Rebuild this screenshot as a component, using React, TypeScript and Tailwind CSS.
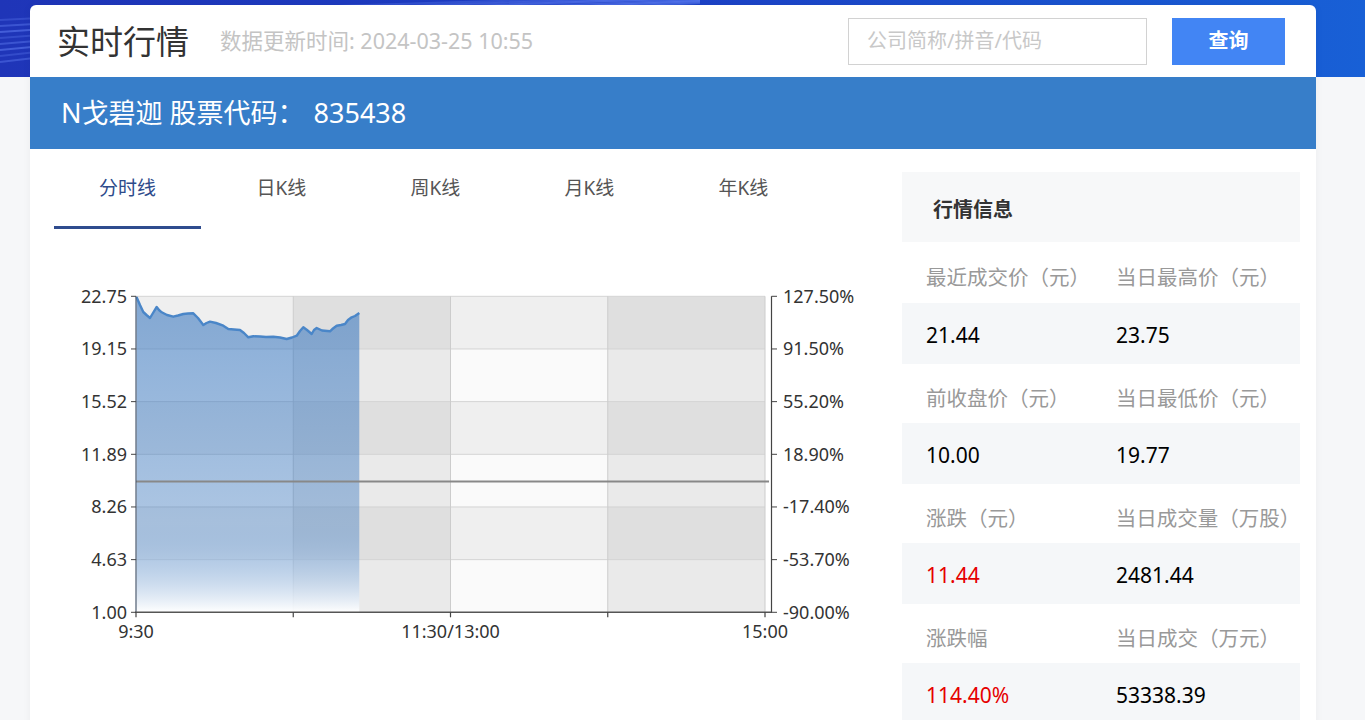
import React from "react";

const F = "font-['Noto_Sans','Noto_Sans_CJK_SC',sans-serif]";

const pts: [number, number][] = [
  [106.5, 68], [110, 76], [113.3, 83], [116.5, 86], [120, 89], [123, 84], [126.7, 78], [129, 81], [131.7, 83.3],
  [137, 86], [143.3, 87.7], [148, 86.5], [153.3, 85], [158, 84.5], [163.3, 84.3], [168, 89], [173.3, 96],
  [176.5, 94], [180, 92.7], [186, 94], [193.3, 96.7], [198.3, 100], [204, 100.5], [210, 101], [214, 104],
  [218.3, 108.3], [223.3, 107.3], [230, 107.5], [236, 108], [243.3, 107.7], [250, 108.5], [256.7, 110],
  [262, 108.5], [266.7, 106.7], [270, 102], [273.3, 98.3], [277, 101], [281.7, 105], [284, 101], [286.7, 99],
  [292, 101.5], [300, 102.3], [303, 99.5], [306.7, 96.7], [311, 96], [315, 95], [318, 91], [321.7, 88.3],
  [325, 87], [329.3, 84],
];

const X0 = 106;
const X1 = 735;
const Y0 = 67.3;
const Y1 = 383.3;
const CW = (X1 - X0) / 4;
const RH = (Y1 - Y0) / 6;

const leftLabels = ["22.75", "19.15", "15.52", "11.89", "8.26", "4.63", "1.00"];
const rightLabels = ["127.50%", "91.50%", "55.20%", "18.90%", "-17.40%", "-53.70%", "-90.00%"];

function Chart() {
  const line = pts.map((p, i) => `${i ? "L" : "M"}${p[0]},${p[1]}`).join(" ");
  const area = `${line} L${pts[pts.length - 1][0]},${Y1} L${pts[0][0]},${Y1} Z`;
  const ff = "'Noto Sans','Noto Sans CJK SC',sans-serif";
  return (
    <svg width="872" height="460" viewBox="0 0 872 460" className="block">
      <defs>
        <linearGradient id="areaG" x1="0" y1="0" x2="0" y2="1">
          <stop offset="0" stopColor="#3a78c0" stopOpacity="0.6" />
          <stop offset="0.72" stopColor="#3a78c0" stopOpacity="0.4" />
          <stop offset="1" stopColor="#ffffff" stopOpacity="0.95" />
        </linearGradient>
      </defs>
      {[0, 1, 2, 3].map((c) => (
        <rect key={"c" + c} x={X0 + c * CW} y={Y0} width={CW} height={Y1 - Y0} fill={c % 2 === 0 ? "#fafafa" : "#eaeaea"} />
      ))}
      {[0, 2, 4].map((r) => (
        <rect key={"r" + r} x={X0} y={Y0 + r * RH} width={X1 - X0} height={RH} fill="#000" fillOpacity="0.045" />
      ))}
      {[0, 1, 2, 3, 4, 5].map((r) => (
        <line key={"h" + r} x1={X0} x2={X1} y1={Y0 + r * RH} y2={Y0 + r * RH} stroke="#d4d4d4" strokeWidth="1" />
      ))}
      {[1, 2, 3, 4].map((c) => (
        <line key={"v" + c} x1={X0 + c * CW} x2={X0 + c * CW} y1={Y0} y2={Y1} stroke="#cccccc" strokeWidth="1" />
      ))}
      <path d={area} fill="url(#areaG)" />
      <path d={line} fill="none" stroke="#4a86c8" strokeWidth="2.4" strokeLinejoin="round" />
      <line x1={X0} x2={739} y1={252.5} y2={252.5} stroke="#888888" strokeWidth="2.2" />
      <line x1={X0} x2={X0} y1={Y0} y2={Y1} stroke="#4c5b70" strokeWidth="1.2" />
      <line x1={741.5} x2={741.5} y1={Y0} y2={Y1} stroke="#444" strokeWidth="1.2" />
      <line x1={X0 - 1} x2={742} y1={Y1} y2={Y1} stroke="#555" strokeWidth="1.6" />
      {leftLabels.map((l, i) => (
        <g key={"l" + i}>
          <line x1={101} x2={X0} y1={Y0 + i * RH} y2={Y0 + i * RH} stroke="#444" strokeWidth="1" />
          <text x={97} y={Y0 + i * RH + 6.5} textAnchor="end" fontSize="18" fill="#333" fontFamily={ff}>
            {l}
          </text>
        </g>
      ))}
      {rightLabels.map((l, i) => (
        <g key={"rl" + i}>
          <line x1={741.5} x2={747} y1={Y0 + i * RH} y2={Y0 + i * RH} stroke="#444" strokeWidth="1" />
          <text x={753} y={Y0 + i * RH + 6.5} fontSize="18" fill="#333" fontFamily={ff}>
            {l}
          </text>
        </g>
      ))}
      {[0, 1, 2, 3, 4].map((c) => (
        <line key={"t" + c} x1={X0 + c * CW} x2={X0 + c * CW} y1={Y1} y2={Y1 + 5} stroke="#444" strokeWidth="1.2" />
      ))}
      <text x={X0} y={409} textAnchor="middle" fontSize="18" fill="#333" fontFamily={ff}>9:30</text>
      <text x={X0 + 2 * CW} y={409} textAnchor="middle" fontSize="18" fill="#333" fontFamily={ff}>11:30/13:00</text>
      <text x={X1} y={409} textAnchor="middle" fontSize="18" fill="#333" fontFamily={ff}>15:00</text>
    </svg>
  );
}

function Banner() {
  return (
    <svg className="absolute inset-0 h-full w-full" viewBox="0 0 1365 77" preserveAspectRatio="none">
      <defs>
        <linearGradient id="bg" x1="0" y1="0" x2="1" y2="0">
          <stop offset="0" stopColor="#1f35b8" />
          <stop offset="0.45" stopColor="#1d3ec4" />
          <stop offset="1" stopColor="#1860d6" />
        </linearGradient>
      </defs>
      <rect width="1365" height="77" fill="url(#bg)" />
      {[0, 1, 2, 3, 4, 5, 6, 7].map((i) => (
        <path
          key={i}
          d={`M0,${20 + i * 6} C200,${10 + i * 4} 420,${2 + i * 2} 700,${-4 + i}`}
          stroke="#6f8fff"
          strokeOpacity={0.25 + (i % 3) * 0.1}
          strokeWidth="2"
          fill="none"
        />
      ))}
    </svg>
  );
}

const rows: { l1: string; l2: string; v1: string; v2: string; red?: boolean }[] = [
  { l1: "最近成交价（元）", l2: "当日最高价（元）", v1: "21.44", v2: "23.75" },
  { l1: "前收盘价（元）", l2: "当日最低价（元）", v1: "10.00", v2: "19.77" },
  { l1: "涨跌（元）", l2: "当日成交量（万股）", v1: "11.44", v2: "2481.44", red: true },
  { l1: "涨跌幅", l2: "当日成交（万元）", v1: "114.40%", v2: "53338.39", red: true },
];

const tabs = ["分时线", "日K线", "周K线", "月K线", "年K线"];

export default function App() {
  return (
    <div className={`relative min-h-screen w-full overflow-hidden bg-[#f6f7f9] ${F}`}>
      <div className="absolute left-0 top-0 h-[77px] w-full">
        <Banner />
      </div>
      <div className="relative ml-[30px] mt-[5px] w-[1286px] rounded-t-[6px] bg-white shadow-[0_0_8px_rgba(0,0,0,0.05)]">
        <div className="flex h-[72px] items-center pl-[27px] pr-[31px]">
          <div className="text-[33px] leading-none text-[#333]">实时行情</div>
          <div className="ml-[31px] mt-[1px] text-[21.5px] text-[#c4c4c4]">数据更新时间: 2024-03-25 10:55</div>
          <div className="ml-auto flex h-[47px] w-[299px] items-center border border-[#d2d2d2] pl-[18px] text-[20px] text-[#c8c8c8]">
            公司简称/拼音/代码
          </div>
          <div className="ml-[25px] flex h-[47px] w-[113px] items-center justify-center bg-[#4285f4] text-[20px] font-bold text-white">
            查询
          </div>
        </div>
        <div className="flex h-[72px] items-center bg-[#377ec9] pl-[31px] text-[27px] text-white">
          <span>N戈碧迦 股票代码：</span>
          <span className="ml-[9px]">835438</span>
        </div>
        <div className="flex">
          <div className="w-[872px]">
            <div className="flex h-[80px] gap-[7px] pl-[24px]">
              {tabs.map((t, i) => (
                <div
                  key={t}
                  className={
                    i === 0
                      ? "flex w-[147px] items-center justify-center border-b-[3px] border-[#2f4c8e] pt-[2px] text-[19px] text-[#2e4b8b]"
                      : "flex w-[147px] items-center justify-center border-b-[3px] border-transparent pt-[2px] text-[19px] text-[#555]"
                  }
                >
                  {t}
                </div>
              ))}
            </div>
            <Chart />
          </div>
          <div className="mt-[23px] w-[398px]">
            <div className="flex h-[70px] items-center bg-[#f7f8f9] pl-[31px] pt-[6px] text-[20px] font-bold text-[#333]">
              行情信息
            </div>
            {rows.map((r, i) => (
              <div key={r.l1}>
                <div className={i === 0 ? "flex h-[61px] items-center pl-[24px] pt-[9px] text-[20.5px] text-[#999]" : "flex h-[59px] items-center pl-[24px] pt-[9px] text-[20.5px] text-[#999]"}>
                  <div className="w-[190px]">{r.l1}</div>
                  <div>{r.l2}</div>
                </div>
                <div className="flex h-[61px] items-center bg-[#f5f7f9] pl-[24px] pt-[4px] text-[21px] text-black">
                  <div className={r.red ? "w-[190px] text-[#e60000]" : "w-[190px]"}>{r.v1}</div>
                  <div>{r.v2}</div>
                </div>
              </div>
            ))}
          </div>
        </div>
      </div>
    </div>
  );
}
